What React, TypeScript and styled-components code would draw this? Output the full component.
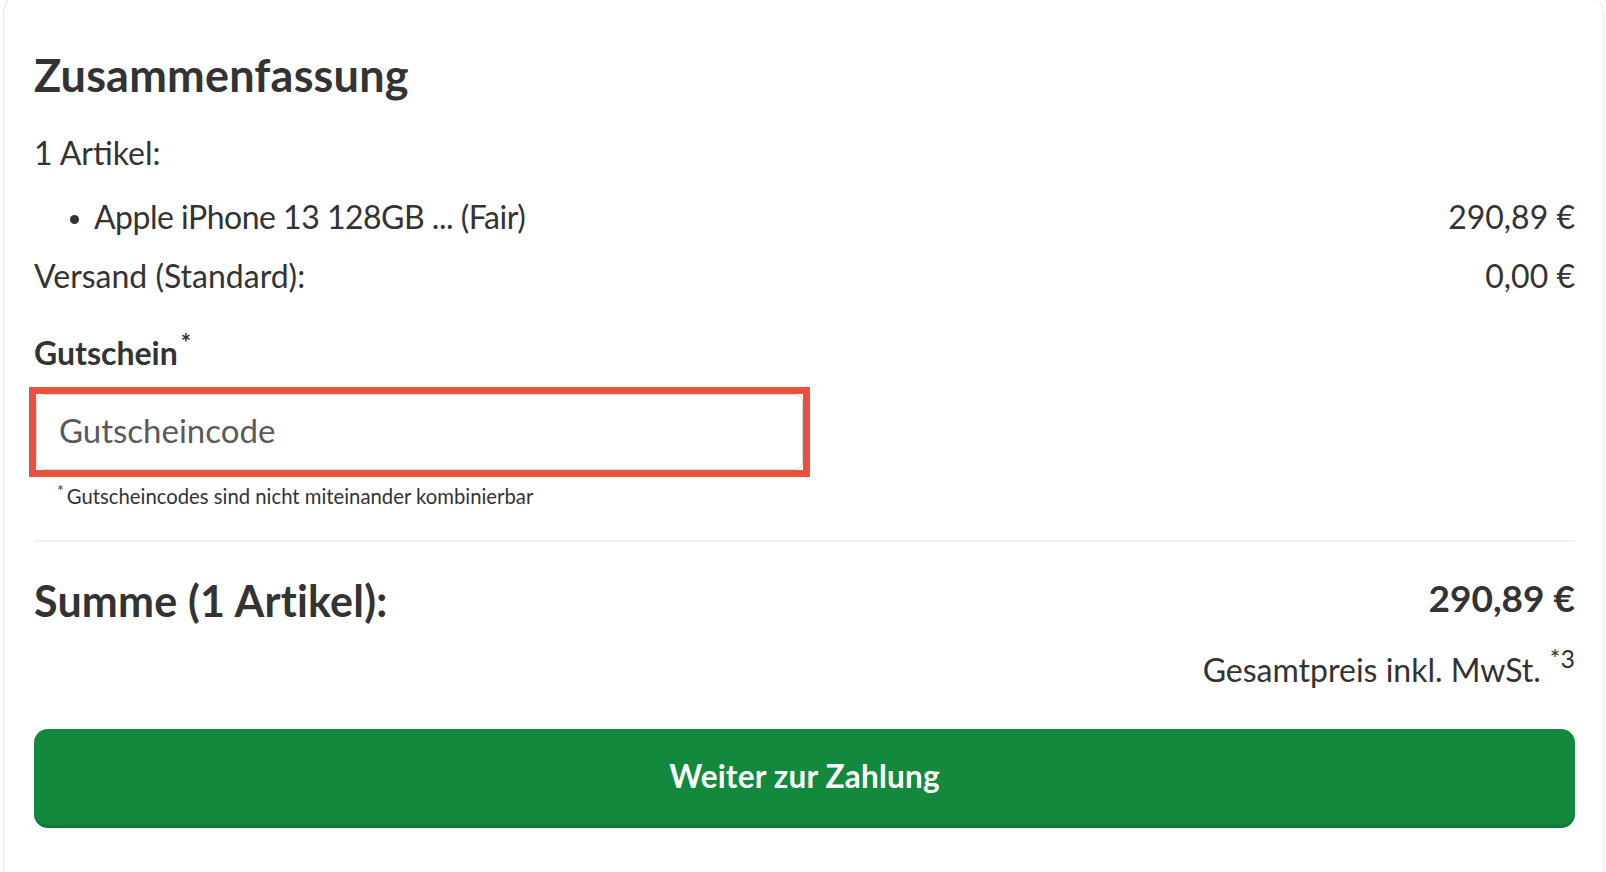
import React from "react";
import styled, { createGlobalStyle } from "styled-components";

const GlobalStyle = createGlobalStyle`
  html, body {
    margin: 0;
    padding: 0;
    background: #ffffff;
    overflow: hidden;
  }
  body {
    font-family: "Lato", "Noto Sans", sans-serif;
    color: #333333;
  }
  * { box-sizing: border-box; }
`;

const Card = styled.section`
  margin: -10px 2px 0 3px;
  border: 1px solid #e8e8e8;
  border-radius: 24px;
  padding: 58px 28px 80px 30px;
  display: flex;
  flex-direction: column;
  background: #fff;
  min-height: 920px;
`;

const Heading = styled.h2`
  margin: 0;
  font-size: 45px;
  line-height: 52px;
  font-weight: 700;
  color: #333;
  letter-spacing: 0.2px;
`;

const Line = styled.div<{ $mt: number }>`
  margin-top: ${(p) => p.$mt}px;
  display: flex;
  justify-content: space-between;
  align-items: center;
  font-size: 32px;
  line-height: 40px;
  color: #333;
`;

const ItemList = styled.ul`
  list-style: none;
  margin: 24px 0 0 0;
  padding: 0;
`;

const Item = styled.li`
  position: relative;
  display: flex;
  justify-content: space-between;
  align-items: center;
  padding-left: 60px;
  font-size: 32px;
  line-height: 40px;
  color: #333;
  &::before {
    content: "";
    position: absolute;
    left: 36px;
    top: 18px;
    width: 9px;
    height: 9px;
    border-radius: 50%;
    background: #333;
  }
`;

const ItemName = styled.span`
  letter-spacing: -0.5px;
`;

const Label = styled.label`
  margin-top: 37px;
  font-size: 32px;
  line-height: 40px;
  font-weight: 700;
  color: #333;
  sup {
    font-size: 24px;
    line-height: 0;
    position: relative;
    top: -1px;
    margin-left: 3px;
  }
`;

const Highlight = styled.div`
  margin: 14px 0 0 -5px;
  width: 781px;
  height: 90px;
  border: 7px solid #e8513f;
  background: #fff;
  display: flex;
`;

const CodeInput = styled.input`
  flex: 1;
  min-width: 0;
  border: 1px solid #d9d9d9;
  border-radius: 8px;
  padding: 0 20px 5px 22px;
  font-family: "Lato", "Noto Sans", sans-serif;
  font-size: 33px;
  color: #333;
  background: #fff;
  outline: none;
  &::placeholder {
    color: #5a5a5a;
    opacity: 1;
  }
`;

const Hint = styled.p`
  margin: 7px 0 0 23px;
  font-size: 20.3px;
  line-height: 24px;
  color: #333;
  sup {
    font-size: 16px;
    line-height: 0;
    position: relative;
    top: 0px;
    margin-right: 3px;
  }
`;

const Divider = styled.hr`
  margin: 32px 0 0 0;
  border: none;
  height: 2px;
  background: #f0f0f0;
`;

const TotalRow = styled.div`
  margin-top: 32px;
  display: flex;
  justify-content: space-between;
  align-items: center;
  height: 52px;
`;

const TotalLabel = styled.span`
  font-size: 43px;
  font-weight: 700;
  color: #333;
  letter-spacing: 0.2px;
`;

const TotalPrice = styled.span`
  font-size: 37px;
  font-weight: 700;
  color: #333;
  margin-top: -6px;
`;

const TaxNote = styled.div`
  margin-top: 26px;
  text-align: right;
  font-size: 32px;
  line-height: 36px;
  color: #333;
  sup {
    font-size: 25px;
    line-height: 0;
    position: relative;
    top: -2px;
    margin-left: 9px;
  }
`;

const PayButton = styled.button`
  margin-top: 41px;
  height: 99px;
  width: 100%;
  border: none;
  border-radius: 14px;
  background: #12893d;
  box-shadow: inset 0 -3px 0 rgba(0, 0, 0, 0.12);
  color: #fff;
  font-family: "Lato", "Noto Sans", sans-serif;
  font-size: 31.5px;
  font-weight: 700;
  letter-spacing: 0.2px;
  padding: 0 0 6px 0;
  cursor: pointer;
`;

export default function App() {
  return (
    <>
      <GlobalStyle />
      <Card>
        <Heading>Zusammenfassung</Heading>
        <Line $mt={32}>1 Artikel:</Line>
        <ItemList>
          <Item>
            <ItemName>Apple iPhone 13 128GB ... (Fair)</ItemName>
            <span>290,89 €</span>
          </Item>
        </ItemList>
        <Line $mt={19}>
          <span>Versand (Standard):</span>
          <span>0,00 €</span>
        </Line>
        <Label htmlFor="code">
          Gutschein<sup>*</sup>
        </Label>
        <Highlight>
          <CodeInput id="code" placeholder="Gutscheincode" />
        </Highlight>
        <Hint>
          <sup>*</sup>Gutscheincodes sind nicht miteinander kombinierbar
        </Hint>
        <Divider />
        <TotalRow>
          <TotalLabel>Summe (1 Artikel):</TotalLabel>
          <TotalPrice>290,89 €</TotalPrice>
        </TotalRow>
        <TaxNote>
          Gesamtpreis inkl. MwSt.<sup>*3</sup>
        </TaxNote>
        <PayButton type="button">Weiter zur Zahlung</PayButton>
      </Card>
    </>
  );
}
